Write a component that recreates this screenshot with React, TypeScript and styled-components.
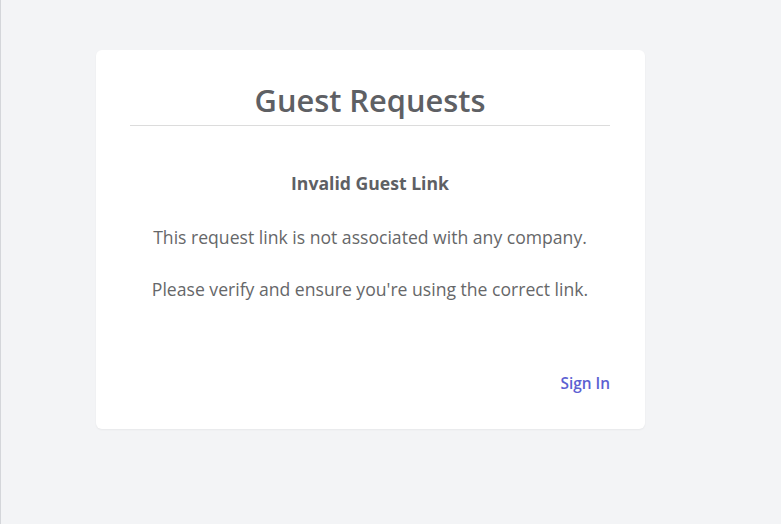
import React from "react";
import styled, { createGlobalStyle } from "styled-components";

const Global = createGlobalStyle`
  html, body { margin: 0; padding: 0; background: #f3f4f6; }
  body { font-family: "Open Sans", "Noto Sans", sans-serif; }
`;

const Page = styled.div`
  min-height: 524px;
  box-sizing: border-box;
  border-left: 1px solid #d4d6da;
  background: #f3f4f6;
  padding: 50px 0 0 95px;
`;

const Card = styled.div`
  width: 549px;
  height: 379px;
  box-sizing: border-box;
  background: #ffffff;
  border-radius: 6px;
  box-shadow: 0 1px 2px rgba(0, 0, 0, 0.05);
  padding: 26px 35px 0 34px;
  display: flex;
  flex-direction: column;
`;

const Title = styled.h1`
  margin: 0;
  font-size: 30.8px;
  font-weight: 600;
  color: #5e6064;
  text-align: center;
  line-height: 48px;
  padding-bottom: 1px;
  border-bottom: 1px solid #dcdcdc;
`;

const Body = styled.div`
  display: flex;
  flex-direction: column;
  align-items: center;
  padding-top: 35px;
  color: #666769;
`;

const Heading = styled.div`
  font-size: 17.6px;
  font-weight: 700;
  color: #5e6064;
  line-height: 44px;
  margin-bottom: 6px;
`;

const Text = styled.p`
  margin: 0;
  font-size: 17.6px;
  line-height: 52px;
`;

const Footer = styled.div`
  display: flex;
  justify-content: flex-end;
  padding-top: 59px;
`;

const SignIn = styled.a`
  font-size: 15.4px;
  font-weight: 600;
  color: #5c60d2;
  text-decoration: none;
  cursor: pointer;
  line-height: 20px;
`;

export default function App() {
  return (
    <>
      <Global />
      <Page>
        <Card>
          <Title>Guest Requests</Title>
          <Body>
            <Heading>Invalid Guest Link</Heading>
            <Text>This request link is not associated with any company.</Text>
            <Text>Please verify and ensure you're using the correct link.</Text>
          </Body>
          <Footer>
            <SignIn>Sign In</SignIn>
          </Footer>
        </Card>
      </Page>
    </>
  );
}
